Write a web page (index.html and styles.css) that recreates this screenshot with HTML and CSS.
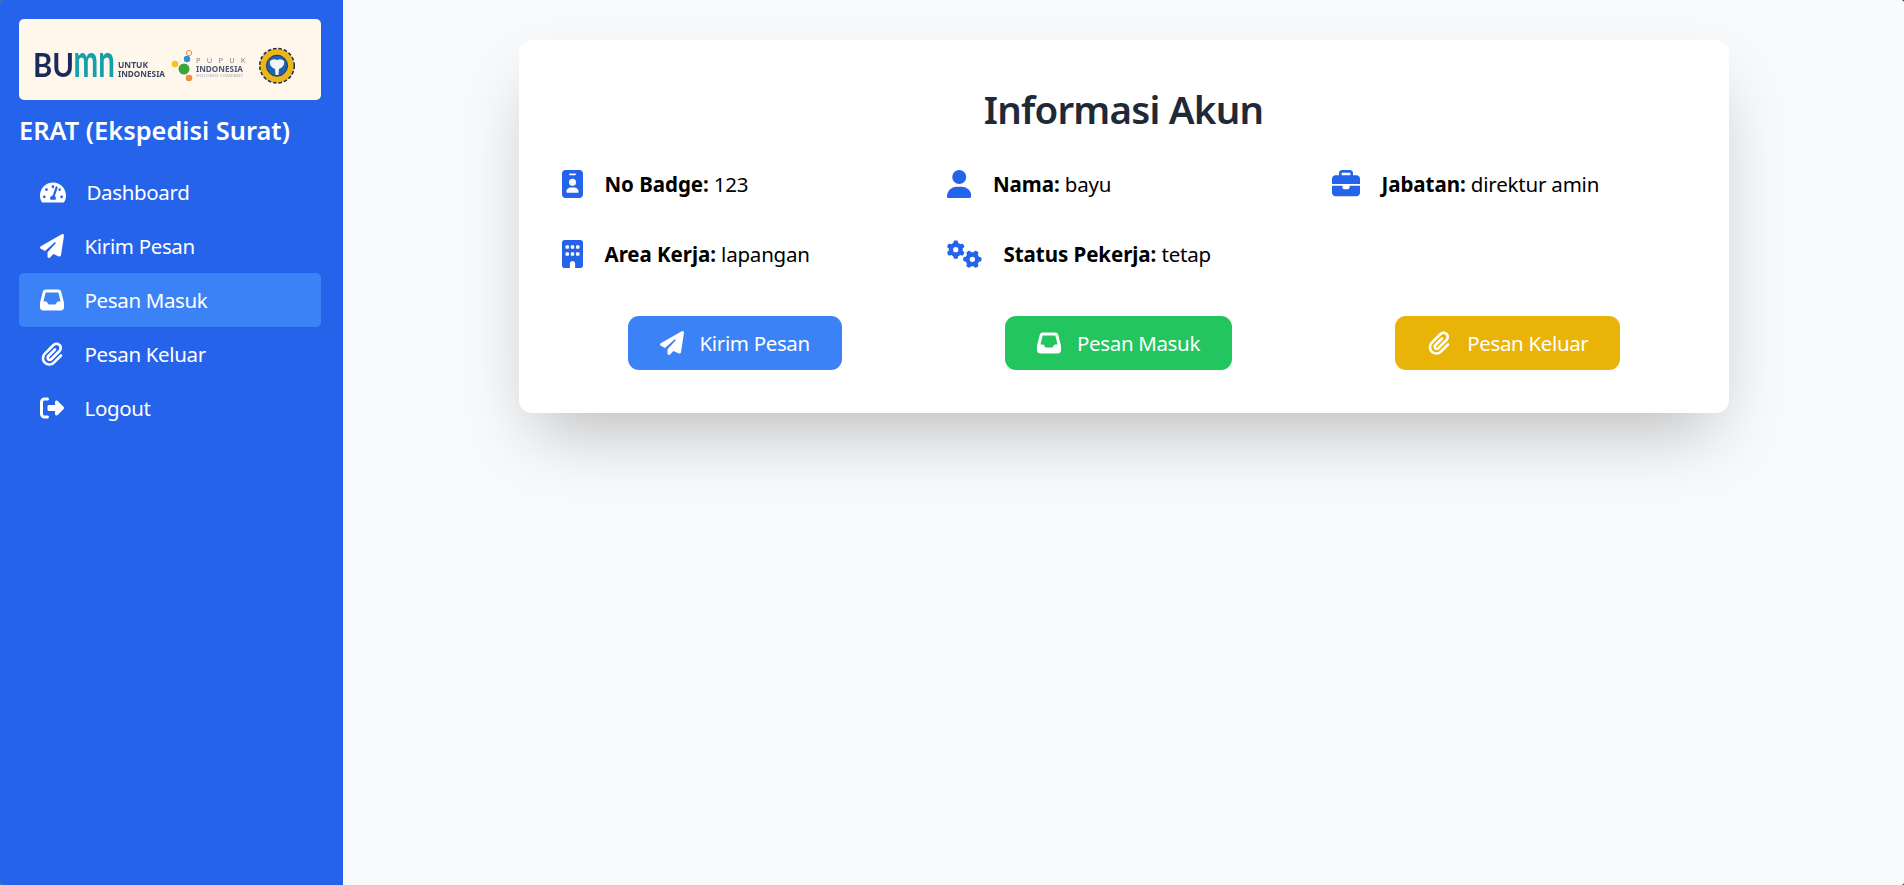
FILE: index.html
```html
<!DOCTYPE html>
<html lang="id">
<head>
<meta charset="utf-8">
<title>ERAT (Ekspedisi Surat)</title>
<link rel="stylesheet" href="styles.css">
</head>
<body>
<div class="app">
  <aside class="sidebar">
    <div class="logo-card">
      <svg class="logo" viewBox="0 0 302 81" role="img" aria-label="Logo BUMN, Pupuk Indonesia">
        <text class="lg-bu" x="14" y="58" textLength="41" lengthAdjust="spacingAndGlyphs">BU</text>
        <text class="lg-mn" transform="translate(54.500 58) scale(.64 1)">mn</text>
        <text class="lg-untuk" x="99" y="49" textLength="30" lengthAdjust="spacingAndGlyphs">UNTUK</text>
        <text class="lg-untuk" x="99" y="58" textLength="47" lengthAdjust="spacingAndGlyphs">INDONESIA</text>
        <circle cx="170" cy="34" r="2.700" fill="none" stroke="#f08a5d" stroke-width="1"/>
        <circle cx="168" cy="40" r="3.200" fill="#2f8fd0"/>
        <circle cx="156" cy="45" r="3.300" fill="#f2c521"/>
        <circle cx="165" cy="50" r="5.500" fill="#3aa53a"/>
        <circle cx="170" cy="59" r="3.300" fill="#f0913a"/>
        <text class="lg-pupuk" x="177" y="44">PUPUK</text>
        <text class="lg-indo" x="177" y="53" textLength="47" lengthAdjust="spacingAndGlyphs">INDONESIA</text>
        <text class="lg-hold" x="177" y="58" textLength="47" lengthAdjust="spacingAndGlyphs">HOLDING COMPANY</text>
        <circle cx="258" cy="46.700" r="17.300" fill="#e9b61c" stroke="#1c2a55" stroke-width="1.500" stroke-dasharray="3.500 2"/>
        <circle cx="258" cy="46.700" r="16" fill="#e9b61c"/>
        <circle cx="258" cy="46.700" r="10.500" fill="#1d63ad" stroke="#22305c" stroke-width="1"/>
        <path d="M251 42q3-3 7-1q4-2 7 1q1 4-3 7l-2 1-.5 6h-3l-.5-6-2-1q-4-3-3-7z" fill="#f2f4f7"/>
      </svg>
    </div>
    <h1 class="brand">ERAT (Ekspedisi Surat)</h1>
    <nav class="menu">
      <a class="menu-item"><svg class="ico ico-gauge" viewBox="0 32 576 448"><path d="M288 32C128.940 32 0 160.940 0 320c0 52.800 14.250 102.260 39.060 144.800 5.610 9.620 16.300 15.200 27.440 15.200h443c11.140 0 21.830-5.580 27.440-15.200C561.750 422.260 576 372.800 576 320c0-159.060-128.940-288-288-288zm0 64c14.710 0 26.580 10.130 30.320 23.650-1.110 2.260-2.640 4.230-3.450 6.670l-9.220 27.670c-5.130 3.490-10.970 6.010-17.640 6.010-17.670 0-32-14.330-32-32S270.330 96 288 96zM96 384c-17.670 0-32-14.330-32-32s14.330-32 32-32 32 14.330 32 32-14.330 32-32 32zm48-160c-17.670 0-32-14.330-32-32s14.330-32 32-32 32 14.330 32 32-14.330 32-32 32zm246.770-72.410l-61.330 184C343.130 347.330 352 364.540 352 384c0 11.720-3.380 22.550-8.880 32H232.880c-5.500-9.450-8.880-20.280-8.880-32 0-33.940 26.500-61.430 59.900-63.590l61.340-184.010c4.170-12.560 17.730-19.450 30.360-15.170 12.570 4.190 19.350 17.790 15.170 30.360zm14.660 57.200l15.520-46.550c3.470-1.290 7.130-2.230 11.050-2.230 17.670 0 32 14.330 32 32s-14.330 32-32 32c-11.380-.01-20.890-6.280-26.570-15.220zM480 384c-17.670 0-32-14.330-32-32s14.330-32 32-32 32 14.330 32 32-14.330 32-32 32z"/></svg><span>Dashboard</span></a>
      <a class="menu-item"><svg class="ico" viewBox="0 0 512 512"><path d="M498.100 5.600c10.100 7 15.400 19.100 13.500 31.200l-64 416c-1.500 9.700-7.400 18.200-16 23s-18.900 5.400-28 1.600L284 427.700l-68.500 74.100c-8.900 9.700-22.900 12.900-35.200 8.100S160 493.200 160 480V396.400c0-4 1.500-7.800 4.200-10.700L331.800 202.800c5.800-6.300 5.600-16-.4-22s-15.700-6.400-22-.7L106 360.800 17.700 316.600C7.100 311.300 .3 300.700 0 288.900s5.900-22.800 16.100-28.700l448-256c10.700-6.100 23.900-5.500 34 1.400z"/></svg><span>Kirim Pesan</span></a>
      <a class="menu-item is-active"><svg class="ico" viewBox="0 0 512 512"><path d="M121 32C91.600 32 66 52 58.900 80.500L1.900 308.400C.6 313.500 0 318.700 0 323.900V416c0 35.300 28.700 64 64 64H448c35.300 0 64-28.700 64-64V323.900c0-5.200-.6-10.400-1.900-15.500l-57-227.900C446 52 420.400 32 391 32H121zm0 64H391l48 192H387.800c-12.100 0-23.200 6.800-28.600 17.700l-14.300 28.600c-5.400 10.800-16.500 17.700-28.600 17.700H195.800c-12.100 0-23.200-6.800-28.600-17.700l-14.300-28.600c-5.400-10.800-16.500-17.700-28.600-17.700H73L121 96z"/></svg><span>Pesan Masuk</span></a>
      <a class="menu-item"><svg class="ico" viewBox="0 0 512 512"><path transform="translate(32 0)" d="M364.200 83.800c-24.400-24.400-64-24.400-88.400 0l-184 184c-42.100 42.100-42.100 110.300 0 152.400s110.300 42.100 152.400 0l152-152c10.900-10.900 28.700-10.900 39.600 0s10.900 28.700 0 39.600l-152 152c-64 64-167.600 64-231.600 0s-64-167.600 0-231.600l184-184c46.300-46.300 121.300-46.300 167.600 0s46.300 121.300 0 167.600l-176 176c-28.600 28.600-75 28.600-103.600 0s-28.600-75 0-103.600l144-144c10.900-10.900 28.700-10.900 39.600 0s10.900 28.700 0 39.600l-144 144c-6.700 6.700-6.700 17.700 0 24.400s17.700 6.700 24.400 0l176-176c24.400-24.400 24.400-64 0-88.400z"/></svg><span>Pesan Keluar</span></a>
      <a class="menu-item"><svg class="ico" viewBox="0 0 512 512"><path d="M377.900 105.900L500.700 228.700c7.200 7.200 11.300 17.100 11.300 27.300s-4.100 20.100-11.300 27.300L377.900 406.100c-6.400 6.400-15 9.900-24 9.900c-18.700 0-33.900-15.200-33.900-33.900l0-62.100-128 0c-17.700 0-32-14.300-32-32l0-64c0-17.700 14.300-32 32-32l128 0 0-62.100c0-18.700 15.200-33.900 33.900-33.900c9 0 17.600 3.500 24 9.900zM160 96L96 96c-17.700 0-32 14.300-32 32l0 256c0 17.700 14.300 32 32 32l64 0c17.700 0 32 14.300 32 32s-14.300 32-32 32l-64 0c-53 0-96-43-96-96L0 128C0 75 43 32 96 32l64 0c17.700 0 32 14.300 32 32s-14.300 32-32 32z"/></svg><span>Logout</span></a>
    </nav>
  </aside>
  <main class="main">
    <section class="card">
      <h2 class="card-title">Informasi Akun</h2>
      <div class="info-grid">
        <div class="info"><svg class="info-ico w-badge" viewBox="0 0 384 512"><path d="M64 0C28.700 0 0 28.700 0 64V448c0 35.300 28.700 64 64 64H320c35.300 0 64-28.700 64-64V64c0-35.300-28.700-64-64-64H64zm96 320h64c44.200 0 80 35.800 80 80c0 8.800-7.200 16-16 16H96c-8.800 0-16-7.200-16-16c0-44.200 35.800-80 80-80zm-32-96a64 64 0 1 1 128 0 64 64 0 1 1 -128 0zM144 64h96c8.800 0 16 7.200 16 16s-7.200 16-16 16H144c-8.800 0-16-7.200-16-16s7.200-16 16-16z"/></svg><p><b>No Badge:</b> 123</p></div>
        <div class="info"><svg class="info-ico w-user" viewBox="0 0 448 512"><path d="M224 256A128 128 0 1 0 224 0a128 128 0 1 0 0 256zm-45.700 48C79.800 304 0 383.800 0 482.300C0 498.700 13.300 512 29.700 512H418.300c16.400 0 29.700-13.300 29.700-29.700C448 383.800 368.200 304 269.700 304H178.300z"/></svg><p><b>Nama:</b> bayu</p></div>
        <div class="info"><svg class="info-ico w-case" viewBox="0 0 512 512"><path d="M184 48H328c4.400 0 8 3.600 8 8V96H176V56c0-4.400 3.600-8 8-8zm-56 8V96H64C28.700 96 0 124.700 0 160v96H192 320 512V160c0-35.300-28.700-64-64-64H384V56c0-30.900-25.100-56-56-56H184c-30.900 0-56 25.100-56 56zM512 288H320v32c0 17.700-14.300 32-32 32H224c-17.700 0-32-14.300-32-32V288H0V416c0 35.300 28.700 64 64 64H448c35.300 0 64-28.700 64-64V288z"/></svg><p><b>Jabatan:</b> direktur amin</p></div>
        <div class="info"><svg class="info-ico w-badge" viewBox="0 0 384 512"><path d="M48 0C21.500 0 0 21.500 0 48V464c0 26.500 21.500 48 48 48h96V432c0-26.500 21.500-48 48-48s48 21.500 48 48v80h96c26.500 0 48-21.500 48-48V48c0-26.500-21.500-48-48-48H48zM64 240c0-8.800 7.200-16 16-16h32c8.800 0 16 7.200 16 16v32c0 8.800-7.200 16-16 16H80c-8.800 0-16-7.200-16-16V240zm112-16h32c8.800 0 16 7.200 16 16v32c0 8.800-7.200 16-16 16H176c-8.800 0-16-7.200-16-16V240c0-8.800 7.200-16 16-16zm80 16c0-8.800 7.200-16 16-16h32c8.800 0 16 7.200 16 16v32c0 8.800-7.200 16-16 16H272c-8.800 0-16-7.200-16-16V240zM80 96h32c8.800 0 16 7.200 16 16v32c0 8.800-7.200 16-16 16H80c-8.800 0-16-7.200-16-16V112c0-8.800 7.200-16 16-16zm80 16c0-8.800 7.200-16 16-16h32c8.800 0 16 7.200 16 16v32c0 8.800-7.200 16-16 16H176c-8.800 0-16-7.200-16-16V112zM272 96h32c8.800 0 16 7.200 16 16v32c0 8.800-7.200 16-16 16H272c-8.800 0-16-7.200-16-16V112c0-8.800 7.200-16 16-16z"/></svg><p><b>Area Kerja:</b> lapangan</p></div>
        <div class="info"><svg class="info-ico w-gears" viewBox="0 0 640 512"><path d="M308.500 135.300c7.100-6.300 9.900-16.200 6.200-25c-2.300-5.300-4.800-10.500-7.600-15.500L304 89.400c-3-5-6.300-9.900-9.800-14.600c-5.700-7.600-15.700-10.100-24.700-7.100l-28.200 9.300c-10.700-8.800-23-16-36.200-20.900L199 27.100c-1.900-9.300-9.100-16.700-18.500-17.800C173.900 8.400 167.200 8 160.400 8h-.7c-6.800 0-13.500 .4-20.100 1.200c-9.400 1.100-16.600 8.600-18.500 17.800L115 56.100c-13.300 5-25.500 12.100-36.200 20.900L50.500 67.800c-9-3-19-.5-24.700 7.100c-3.500 4.700-6.800 9.600-9.900 14.600l-3 5.300c-2.800 5-5.300 10.200-7.600 15.600c-3.700 8.700-.9 18.600 6.200 25l22.200 19.800C32.600 161.900 32 168.900 32 176s.6 14.100 1.700 20.900L11.500 216.700c-7.100 6.300-9.900 16.200-6.200 25c2.300 5.300 4.800 10.500 7.600 15.600l3 5.200c3 5.100 6.300 9.900 9.900 14.600c5.700 7.600 15.700 10.100 24.700 7.100l28.200-9.300c10.700 8.800 23 16 36.200 20.900l6.100 29.100c1.900 9.300 9.100 16.700 18.500 17.800c6.700 .8 13.500 1.200 20.400 1.200s13.700-.4 20.400-1.200c9.400-1.100 16.600-8.600 18.500-17.800l6.100-29.100c13.300-5 25.500-12.100 36.200-20.900l28.200 9.300c9 3 19 .5 24.700-7.100c3.500-4.700 6.800-9.500 9.800-14.600l3.100-5.400c2.800-5 5.300-10.200 7.600-15.500c3.700-8.700 .9-18.600-6.200-25l-22.200-19.800c1.100-6.800 1.700-13.800 1.700-20.900s-.6-14.100-1.700-20.900l22.200-19.800zM112 176a48 48 0 1 1 96 0 48 48 0 1 1 -96 0zM504.700 500.500c6.300 7.100 16.200 9.900 25 6.200c5.300-2.300 10.500-4.800 15.500-7.600l5.400-3.100c5-3 9.900-6.300 14.600-9.800c7.600-5.700 10.100-15.700 7.100-24.700l-9.300-28.200c8.800-10.700 16-23 20.900-36.200l29.100-6.100c9.300-1.900 16.700-9.100 17.800-18.500c.8-6.700 1.200-13.500 1.200-20.400s-.4-13.700-1.200-20.400c-1.100-9.400-8.600-16.600-17.800-18.500L583.900 307c-5-13.300-12.100-25.500-20.900-36.200l9.300-28.200c3-9 .5-19-7.100-24.700c-4.700-3.500-9.600-6.800-14.600-9.900l-5.300-3c-5-2.800-10.200-5.300-15.600-7.600c-8.700-3.700-18.600-.9-25 6.200l-19.800 22.200c-6.800-1.100-13.800-1.700-20.900-1.700s-14.100 .6-20.900 1.700l-19.800-22.200c-6.300-7.100-16.200-9.900-25-6.200c-5.300 2.300-10.500 4.800-15.600 7.600l-5.200 3c-5.100 3-9.900 6.300-14.600 9.900c-7.600 5.700-10.100 15.700-7.100 24.700l9.300 28.200c-8.800 10.700-16 23-20.900 36.200L315.100 313c-9.300 1.900-16.700 9.100-17.800 18.500c-.8 6.700-1.200 13.500-1.200 20.400s.4 13.700 1.200 20.400c1.100 9.400 8.600 16.600 17.800 18.500l29.100 6.100c5 13.300 12.100 25.500 20.900 36.200l-9.300 28.200c-3 9-.5 19 7.100 24.700c4.700 3.500 9.500 6.800 14.600 9.800l5.400 3.100c5 2.800 10.200 5.300 15.500 7.600c8.700 3.700 18.600 .9 25-6.200l19.800-22.200c6.800 1.100 13.800 1.700 20.900 1.700s14.100-.6 20.900-1.700l19.800 22.200zM464 304a48 48 0 1 1 0 96 48 48 0 1 1 0-96z"/></svg><p><b>Status Pekerja:</b> tetap</p></div>
      </div>
      <div class="actions">
        <a class="btn btn-blue"><svg class="ico btn-ico" viewBox="0 0 512 512"><path d="M498.100 5.600c10.100 7 15.400 19.100 13.500 31.200l-64 416c-1.500 9.700-7.400 18.200-16 23s-18.900 5.400-28 1.600L284 427.700l-68.500 74.100c-8.900 9.700-22.900 12.900-35.200 8.100S160 493.200 160 480V396.400c0-4 1.500-7.800 4.200-10.700L331.800 202.800c5.800-6.300 5.600-16-.4-22s-15.700-6.400-22-.7L106 360.800 17.700 316.600C7.100 311.300 .3 300.700 0 288.900s5.900-22.800 16.100-28.700l448-256c10.700-6.100 23.900-5.500 34 1.400z"/></svg><span>Kirim Pesan</span></a>
        <a class="btn btn-green"><svg class="ico btn-ico" viewBox="0 0 512 512"><path d="M121 32C91.600 32 66 52 58.900 80.500L1.900 308.400C.6 313.500 0 318.700 0 323.900V416c0 35.300 28.700 64 64 64H448c35.300 0 64-28.700 64-64V323.900c0-5.200-.6-10.400-1.900-15.500l-57-227.900C446 52 420.400 32 391 32H121zm0 64H391l48 192H387.800c-12.100 0-23.200 6.800-28.600 17.700l-14.300 28.600c-5.400 10.800-16.500 17.700-28.600 17.700H195.800c-12.100 0-23.200-6.800-28.600-17.700l-14.300-28.600c-5.400-10.800-16.500-17.700-28.600-17.700H73L121 96z"/></svg><span>Pesan Masuk</span></a>
        <a class="btn btn-yellow"><svg class="ico btn-ico" viewBox="0 0 512 512"><path transform="translate(32 0)" d="M364.200 83.800c-24.400-24.400-64-24.400-88.400 0l-184 184c-42.100 42.100-42.100 110.300 0 152.400s110.300 42.100 152.400 0l152-152c10.900-10.900 28.700-10.900 39.600 0s10.900 28.700 0 39.600l-152 152c-64 64-167.600 64-231.600 0s-64-167.600 0-231.600l184-184c46.300-46.300 121.300-46.300 167.600 0s46.300 121.300 0 167.600l-176 176c-28.600 28.600-75 28.600-103.600 0s-28.600-75 0-103.600l144-144c10.900-10.900 28.700-10.900 39.600 0s10.900 28.700 0 39.600l-144 144c-6.700 6.700-6.700 17.700 0 24.400s17.700 6.700 24.400 0l176-176c24.400-24.400 24.400-64 0-88.400z"/></svg><span>Pesan Keluar</span></a>
      </div>
    </section>
  </main>
</div>
</body>
</html>
```
FILE: styles.css
```css
* { box-sizing: border-box; }
html, body { margin: 0; height: 100%; }
html { background: #3a3a3a; }
body {
  font-family: "Noto Sans", "Open Sans", sans-serif;
  color: #000;
  overflow: hidden;
}
.app {
  display: flex;
  height: 885px;
  background: #f9fafb;
  border-radius: 3px;
  overflow: hidden;
}
.sidebar {
  width: 343px;
  flex: none;
  background: #2563eb;
  padding: 19px 22px 19px 19px;
  color: #fff;
}
.logo-card {
  height: 81px;
  background: #fff7ec;
  border-radius: 5px;
  overflow: hidden;
}
.logo { display: block; width: 302px; height: 81px; filter: blur(.35px); }
.lg-bu { font: 700 32px "Lato", sans-serif; fill: #1c2a5a; }
.lg-mn { font: 700 46px "Lato", sans-serif; fill: #14a0a8; }
.lg-untuk { font: 700 9px "Noto Sans", sans-serif; fill: #3c4763; }
.lg-pupuk { font: 400 7.500px "Noto Sans", sans-serif; fill: #7b8494; letter-spacing: 6.200px; }
.lg-indo { font: 700 8px "Noto Sans", sans-serif; fill: #4a5878; }
.lg-hold { font: 400 3.200px "Noto Sans", sans-serif; fill: #aab0b8; }
.brand {
  margin: 12px 0 0;
  font-size: 25.400px;
  line-height: 36px;
  font-weight: 600;
  white-space: nowrap;
}
.menu { display: flex; flex-direction: column; margin-top: 17px; }
.menu-item {
  display: flex;
  align-items: center;
  gap: 20.500px;
  height: 54px;
  padding-left: 21px;
  border-radius: 5px;
  font-size: 20.500px;
  letter-spacing: -.35px;
  color: #fff;
}
.menu-item.is-active { background: #3b82f6; }
.ico { width: 24px; height: 24px; fill: currentColor; flex: none; }
.ico-gauge { width: 26px; height: 21px; }
.main { flex: 1; min-width: 0; padding-top: 40px; display: flex; justify-content: center; align-items: flex-start; }
.card {
  width: 1210px;
  height: 373px;
  background: #fff;
  border-radius: 13px;
  padding: 42px 43px 0;
  box-shadow: 0 33px 67px -16px rgba(0, 0, 0, .25);
}
.card-title {
  margin: 0;
  text-align: center;
  font-size: 38.500px;
  line-height: 54px;
  font-weight: 600;
  letter-spacing: -.8px;
  color: #1f2937;
}
.info-grid {
  display: grid;
  grid-template-columns: repeat(3, 1fr);
  column-gap: 31px;
  row-gap: 42px;
  margin-top: 34px;
}
.info { display: flex; align-items: center; gap: 22px; height: 28px; }
.info p { margin: 0; font-size: 20.500px; line-height: 28px; white-space: nowrap; letter-spacing: -.2px; }
.info b { font-weight: 700; letter-spacing: -.05px; }
.info-ico { height: 28px; fill: #2563eb; flex: none; }
.w-badge { width: 21px; }
.w-user { width: 24.500px; }
.w-case { width: 28px; }
.w-gears { width: 35px; }
.actions { display: flex; justify-content: space-between; padding: 0 65px 0 66px; margin-top: 48px; }
.btn {
  display: flex;
  align-items: center;
  gap: 16px;
  height: 54px;
  padding: 0 32px;
  border-radius: 11px;
  color: #fff;
  font-size: 20.500px;
  letter-spacing: -.35px;
}
.btn-ico { width: 24px; height: 24px; }
.btn-blue { background: #3b82f6; }
.btn-green { background: #22c55e; }
.btn-yellow { background: #eab308; }
```
